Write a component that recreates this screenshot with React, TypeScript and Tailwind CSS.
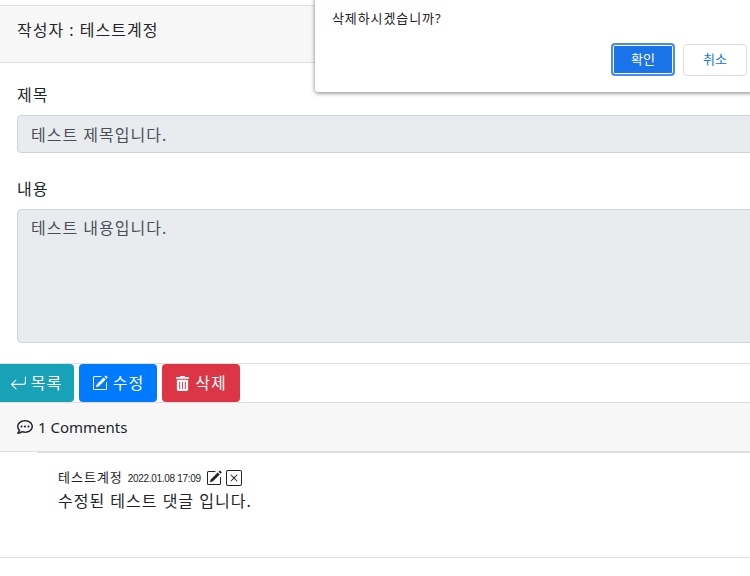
import { BsArrowReturnLeft, BsPencilSquare, BsXSquare } from "react-icons/bs";
import { FaRegCommentDots, FaTrashAlt } from "react-icons/fa";

const fontStack = "font-['Noto_Sans','Noto_Sans_CJK_KR',sans-serif]";

function Field({ label, value, area }: { label: string; value: string; area?: boolean }) {
  return (
    <div className={area ? "mb-5" : "mb-6"}>
      <div className="mb-2 text-base leading-6 tracking-[1px] text-[#212529]">{label}</div>
      <div
        className={`-mr-2 rounded border border-[#ced4da] bg-[#e9ecef] px-[13px] text-base leading-6 tracking-[1px] text-[#495057] ${
          area ? "h-[134px] py-[6px]" : "h-[38px] py-[7px]"
        }`}
      >
        {value}
      </div>
    </div>
  );
}

export default function App() {
  return (
    <div className={`relative h-[576px] w-[750px] overflow-hidden bg-white ${fontStack}`}>
      <div className="pt-[5px]">
        <div className="h-[58px] border-y border-[#dfdfdf] bg-[#f7f7f7] px-[17px] pt-[12px] text-base leading-6 tracking-[1px] text-[#212529]">
          작성자 : 테스트계정
        </div>

        <div className="pl-[17px] pt-[20px]">
          <Field label="제목" value="테스트 제목입니다." />
          <Field label="내용" value="테스트 내용입니다." area />
        </div>

        <div className="flex h-[40px] gap-[5px] border-y border-[#dfdfdf]">
          <button className="flex w-[74px] items-center justify-center gap-[4px] rounded-r bg-[#17a2b8] pr-[2px] text-base tracking-[1px] text-white">
            <BsArrowReturnLeft size={17} />
            목록
          </button>
          <button className="flex w-[78px] items-center justify-center gap-[5px] rounded bg-[#007bff] text-base tracking-[1px] text-white">
            <BsPencilSquare size={16} />
            수정
          </button>
          <button className="flex w-[78px] items-center justify-center gap-[5px] rounded bg-[#dc3545] text-base tracking-[1px] text-white">
            <FaTrashAlt size={15} />
            삭제
          </button>
        </div>

        <div className="flex h-[49px] items-center gap-[5px] border-b border-[#dfdfdf] bg-[#f7f7f7] px-[17px] text-[15px] text-[#212529]">
          <FaRegCommentDots size={16} />
          <span>1 Comments</span>
        </div>

        <div className="h-[106px] border-b border-[#dfdfdf]">
          <div className="ml-[37px] h-[1px] bg-[#dfdfdf]" />
          <div className="pl-[58px] pt-[15px]">
            <div className="flex h-[20px] items-center text-[#212529]">
              <span className="text-[13px] tracking-[1px]">테스트계정</span>
              <span className="ml-[5px] font-['Liberation_Sans',sans-serif] text-[10px] tracking-[-0.3px]">2022.01.08 17:09</span>
              <BsPencilSquare size={16} className="ml-[5px] text-[#212529]" />
              <BsXSquare size={16} className="ml-[4px] text-[#212529]" />
            </div>
            <div className="mt-[1px] text-base leading-6 tracking-[1px] text-[#212529]">수정된 테스트 댓글 입니다.</div>
          </div>
        </div>
      </div>

      <div className="absolute left-[315px] top-[-10px] h-[102px] w-[460px] rounded-[3px] bg-white pl-[17px] pt-[20px] shadow-[0_1px_4px_rgba(0,0,0,0.5)]">
        <div className="text-[13px] leading-4 tracking-[0.9px] text-[#202124]">삭제하시겠습니까?</div>
        <div className="mt-[17px] flex gap-[8px] pl-[279px]">
          <button className="h-[33px] w-[64px] rounded-[4px] border-2 border-[#4a8af4] bg-[#1a73e8] text-[13px] text-white shadow-[inset_0_0_0_1px_white]">
            확인
          </button>
          <button className="mt-[1px] h-[32px] w-[64px] rounded-[4px] border border-[#dadce0] bg-white text-[13px] text-[#1a73e8]">
            취소
          </button>
        </div>
      </div>
    </div>
  );
}
